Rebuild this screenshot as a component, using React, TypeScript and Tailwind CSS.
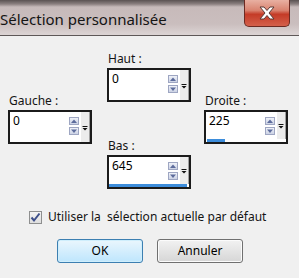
import React from "react";

const font = "font-['Noto_Sans','Open_Sans',sans-serif]";

function SpinArrow({ up }: { up: boolean }) {
  return (
    <svg width="10" height="8" viewBox="0 0 10 8">
      <defs>
        <linearGradient id={up ? "gu" : "gd"} x1="0" y1="0" x2="0" y2="1">
          <stop offset="0" stopColor="#f2f4fa" />
          <stop offset="1" stopColor="#c9d0e3" />
        </linearGradient>
      </defs>
      <rect x="0.5" y="0.5" width="9" height="7" fill={`url(#${up ? "gu" : "gd"})`} stroke="#9ea6c2" />
      {up ? (
        <path d="M2 6 L5 2.5 L8 6 Z" fill="#5d6c9c" />
      ) : (
        <path d="M2 2.5 L5 6 L8 2.5 Z" fill="#5d6c9c" />
      )}
    </svg>
  );
}

function SpinBox({ label, value, bar }: { label: string; value: string; bar?: "part" | "full" }) {
  return (
    <div className="flex flex-col">
      <div className="text-[12px] leading-[16px] text-[#141414] pl-[1px] mb-[1px]">{label}</div>
      <div className="w-[84px] h-[34px] border-2 border-[#1b1b1b] bg-white flex flex-col">
        <div className="flex flex-1 min-h-0">
          <div className="flex-1 pl-[3px] pt-[1px] text-[12px] leading-[16px] text-black">{value}</div>
          <div className="flex flex-col gap-[2px] pt-[5px] mr-[1px]">
            <SpinArrow up />
            <SpinArrow up={false} />
          </div>
          <div className="w-[10px] bg-[#ececec] border-l border-white border-r border-r-[#a0a0a0] flex items-center justify-center pt-[2px]">
            <svg width="6" height="5" viewBox="0 0 6 5">
              <rect x="0.5" y="0" width="5" height="1" fill="#111" />
              <path d="M0.5 2 L5.5 2 L3 4.5 Z" fill="#111" />
            </svg>
          </div>
        </div>
        {bar && (
          <div className="h-[3px] flex">
            <div className={bar === "full" ? "w-[78px] bg-[#3d8ddb]" : "w-[18px] ml-[1px] bg-[#3d8ddb]"} />
          </div>
        )}
      </div>
    </div>
  );
}

export default function App() {
  return (
    <div className={`w-[299px] h-[278px] bg-[#f0f0f0] flex flex-col overflow-hidden ${font}`}>
      {/* barre de titre */}
      <div className="h-[36px] flex flex-col bg-[linear-gradient(to_bottom,#5a5252_0px,#8a7f7f_4px,#c7baba_7px,#cabebe_24px,#dbd3d3_34px)] border-b border-[#5e5858]">
        <div className="flex flex-1 items-start">
          <div className="pt-[9px] text-[15px] leading-[20px] text-[#141414] whitespace-nowrap">
            Sélection personnalisée
          </div>
          <div className="flex-1" />
          <div className="mr-[9px] w-[46px] h-[27px] rounded-b-[5px] border border-t-0 border-[#6b2a22] bg-[linear-gradient(to_bottom,#e8b0a2_0%,#d9826f_40%,#c43b27_55%,#d4604b_100%)] flex items-center justify-center">
            <svg width="18" height="14" viewBox="0 0 18 14">
              <path
                d="M2 1 L6 1 L9 4.5 L12 1 L16 1 L11 7 L16 13 L12 13 L9 9.5 L6 13 L2 13 L7 7 Z"
                fill="#ffffff"
                stroke="#5a3a36"
                strokeWidth="1"
                strokeLinejoin="round"
              />
            </svg>
          </div>
        </div>
      </div>

      {/* corps */}
      <div className="flex flex-col px-[8px] pt-[15px]">
        <div className="flex">
          <div className="pt-[42px]">
            <SpinBox label="Gauche :" value="0" />
          </div>
          <div className="ml-[15px] flex flex-col">
            <SpinBox label="Haut :" value="0" />
            <div className="mt-[36px]">
              <SpinBox label="Bas :" value="645" bar="full" />
            </div>
          </div>
          <div className="ml-[13px] pt-[42px]">
            <SpinBox label="Droite :" value="225" bar="part" />
          </div>
        </div>

        <div className="flex items-center mt-[20px] ml-[21px]">
          <div className="w-[13px] h-[13px] border border-[#8e8f8f] bg-gradient-to-b from-[#f4f4f4] to-[#dedede] flex items-center justify-center">
            <svg width="11" height="11" viewBox="0 0 11 11">
              <path d="M1.5 5.5 L4 8.5 L9.5 1.5" fill="none" stroke="#3d4f8a" strokeWidth="2" />
            </svg>
          </div>
          <div className="ml-[6px] text-[12px] leading-[16px] text-[#141414] whitespace-pre">
            Utiliser la  sélection actuelle par défaut
          </div>
        </div>

        <div className="flex mt-[14px] ml-[49px] gap-[14px]">
          <button className="w-[86px] h-[24px] rounded-[3px] border border-[#3c7fb1] bg-gradient-to-b from-[#eaf6fd] to-[#bee6fd] text-[12px] text-black shadow-[inset_0_0_0_1px_#cfeefc]">
            OK
          </button>
          <button className="w-[86px] h-[24px] rounded-[3px] border border-[#707070] bg-gradient-to-b from-[#f2f2f2] to-[#d6d6d6] text-[12px] text-black shadow-[inset_0_0_0_1px_#fbfbfb]">
            Annuler
          </button>
        </div>
      </div>
    </div>
  );
}
